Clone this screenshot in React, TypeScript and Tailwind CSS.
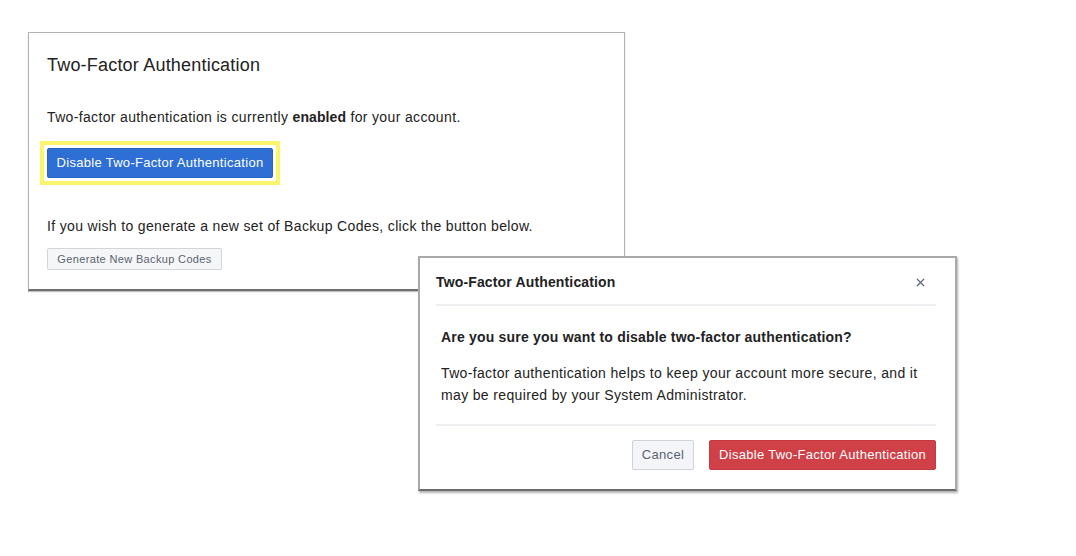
import { X } from "lucide-react";

function SettingsPanel() {
  return (
    <div className="ml-[28px] mt-[32px] w-[597px] h-[259px] bg-white border border-[#b3b3b3] border-b-[2px] border-b-[#6f6f6f] shadow-[0_1px_1px_rgba(0,0,0,0.25)] px-[18px] pt-[20px] tracking-[0.35px]" data-name="Settings Panel">
      <h2 className="text-[18px] leading-[24px] text-[#222] tracking-[0.2px]">Two-Factor Authentication</h2>
      <p className="mt-[30px] text-[14px] leading-[20px] text-[#222]">
        Two-factor authentication is currently <span className="font-bold tracking-[0.1px]">enabled</span> for your account.
      </p>
      {/* highlight ring round the primary action */}
      <div className="mt-[14px] -ml-[7px] inline-block border-4 border-[#fcf46c] p-[3px]">
        <button className="block h-[30px] w-[226px] rounded-[2px] bg-[#2d6fd4] border border-[#2662c2] text-white text-[13px] tracking-[0.3px]">
          Disable Two-Factor Authentication
        </button>
      </div>
      <p className="mt-[31px] text-[14px] leading-[20px] text-[#222]">
        If you wish to generate a new set of Backup Codes, click the button below.
      </p>
      <button className="mt-[12px] h-[22px] w-[175px] rounded-[2px] bg-[#f5f6f8] border border-[#d2d5da] text-[#5a6272] text-[11px] tracking-[0.35px]">
        Generate New Backup Codes
      </button>
    </div>
  );
}

function ConfirmModal() {
  return (
    <div className="absolute left-[418px] top-[256px] w-[539px] h-[235px] bg-white border-2 border-[#a9a9a9] border-b-[#6c6c6c] shadow-[1px_2px_2px_rgba(0,0,0,0.3)] pl-[16px] pr-[19px]" data-name="Confirm Modal">
      <div className="flex items-center justify-between pt-[14px] pb-[12px] border-b-2 border-[#eceef1]">
        <h3 className="text-[14px] leading-[20px] font-bold text-[#222] tracking-[0.15px]">Two-Factor Authentication</h3>
        <X size={13} strokeWidth={2.2} className="text-[#5b6577] mr-[9px]" />
      </div>
      <div className="px-[5px] pt-[21px] pb-[18px] border-b-2 border-[#eceef1]">
        <p className="text-[14px] leading-[20px] font-bold text-[#222] tracking-[0.2px]">
          Are you sure you want to disable two-factor authentication?
        </p>
        <p className="mt-[15px] text-[14px] leading-[22px] text-[#222] tracking-[0.35px]">
          Two-factor authentication helps to keep your account more secure, and it may be required by your System Administrator.
        </p>
      </div>
      <div className="flex justify-end gap-[15px] pt-[14px]">
        <button className="h-[30px] w-[62px] rounded-[2px] bg-[#f4f5f8] border border-[#cfd2d8] text-[#5a6272] text-[13px] tracking-[0.3px]">
          Cancel
        </button>
        <button className="h-[30px] w-[227px] rounded-[2px] bg-[#cf4047] border border-[#c33a41] text-white text-[13px] tracking-[0.3px]">
          Disable Two-Factor Authentication
        </button>
      </div>
    </div>
  );
}

export default function App() {
  return (
    <div className="relative w-[1076px] h-[556px] bg-white overflow-hidden font-['Liberation_Sans',Arial,sans-serif]" data-name="Two Factor Screen">
      <SettingsPanel />
      <ConfirmModal />
    </div>
  );
}
